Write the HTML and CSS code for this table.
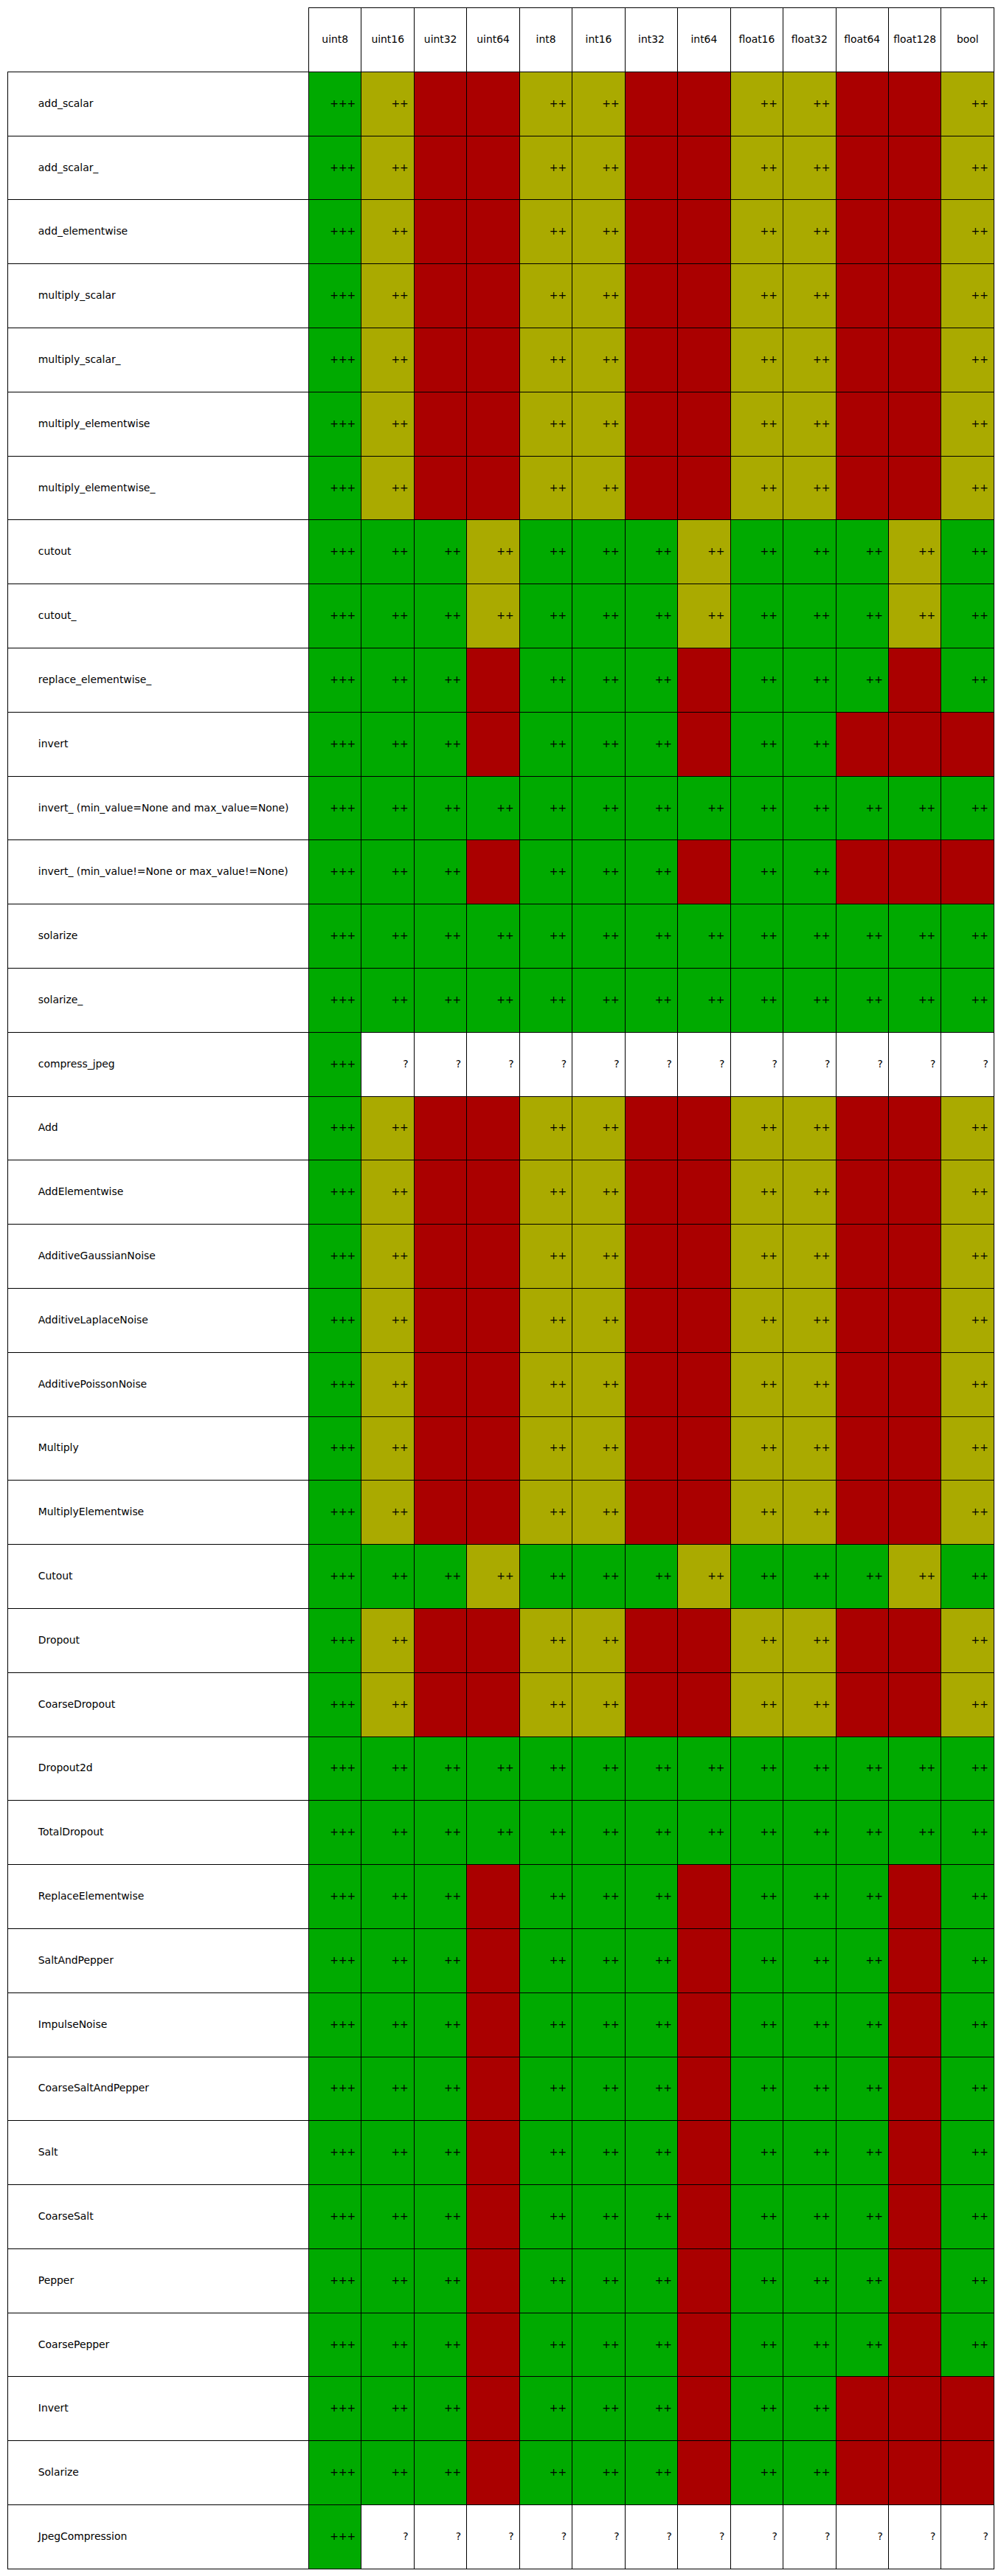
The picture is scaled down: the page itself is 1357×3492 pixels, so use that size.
FILE: index.html
```html
<!DOCTYPE html>
<html lang="en">
<head>
<meta charset="utf-8">
<title>Augmenter dtype support</title>
<link rel="stylesheet" href="styles.css">
</head>
<body>
<table class="grid">
<colgroup><col class="c-lbl"><col class="c-d"><col class="c-d"><col class="c-d"><col class="c-d"><col class="c-d"><col class="c-d"><col class="c-d"><col class="c-d"><col class="c-d"><col class="c-d"><col class="c-d"><col class="c-d"><col class="c-d"></colgroup>
<thead>
<tr><th class="corner"></th><th>uint8</th><th>uint16</th><th>uint32</th><th>uint64</th><th>int8</th><th>int16</th><th>int32</th><th>int64</th><th>float16</th><th>float32</th><th>float64</th><th>float128</th><th>bool</th></tr>
</thead>
<tbody>
<tr><th class="lbl">add_scalar</th><td class="g">+++</td><td class="y">++</td><td class="r"></td><td class="r"></td><td class="y">++</td><td class="y">++</td><td class="r"></td><td class="r"></td><td class="y">++</td><td class="y">++</td><td class="r"></td><td class="r"></td><td class="y">++</td></tr>
<tr><th class="lbl">add_scalar_</th><td class="g">+++</td><td class="y">++</td><td class="r"></td><td class="r"></td><td class="y">++</td><td class="y">++</td><td class="r"></td><td class="r"></td><td class="y">++</td><td class="y">++</td><td class="r"></td><td class="r"></td><td class="y">++</td></tr>
<tr><th class="lbl">add_elementwise</th><td class="g">+++</td><td class="y">++</td><td class="r"></td><td class="r"></td><td class="y">++</td><td class="y">++</td><td class="r"></td><td class="r"></td><td class="y">++</td><td class="y">++</td><td class="r"></td><td class="r"></td><td class="y">++</td></tr>
<tr><th class="lbl">multiply_scalar</th><td class="g">+++</td><td class="y">++</td><td class="r"></td><td class="r"></td><td class="y">++</td><td class="y">++</td><td class="r"></td><td class="r"></td><td class="y">++</td><td class="y">++</td><td class="r"></td><td class="r"></td><td class="y">++</td></tr>
<tr><th class="lbl">multiply_scalar_</th><td class="g">+++</td><td class="y">++</td><td class="r"></td><td class="r"></td><td class="y">++</td><td class="y">++</td><td class="r"></td><td class="r"></td><td class="y">++</td><td class="y">++</td><td class="r"></td><td class="r"></td><td class="y">++</td></tr>
<tr><th class="lbl">multiply_elementwise</th><td class="g">+++</td><td class="y">++</td><td class="r"></td><td class="r"></td><td class="y">++</td><td class="y">++</td><td class="r"></td><td class="r"></td><td class="y">++</td><td class="y">++</td><td class="r"></td><td class="r"></td><td class="y">++</td></tr>
<tr><th class="lbl">multiply_elementwise_</th><td class="g">+++</td><td class="y">++</td><td class="r"></td><td class="r"></td><td class="y">++</td><td class="y">++</td><td class="r"></td><td class="r"></td><td class="y">++</td><td class="y">++</td><td class="r"></td><td class="r"></td><td class="y">++</td></tr>
<tr><th class="lbl">cutout</th><td class="g">+++</td><td class="g">++</td><td class="g">++</td><td class="y">++</td><td class="g">++</td><td class="g">++</td><td class="g">++</td><td class="y">++</td><td class="g">++</td><td class="g">++</td><td class="g">++</td><td class="y">++</td><td class="g">++</td></tr>
<tr><th class="lbl">cutout_</th><td class="g">+++</td><td class="g">++</td><td class="g">++</td><td class="y">++</td><td class="g">++</td><td class="g">++</td><td class="g">++</td><td class="y">++</td><td class="g">++</td><td class="g">++</td><td class="g">++</td><td class="y">++</td><td class="g">++</td></tr>
<tr><th class="lbl">replace_elementwise_</th><td class="g">+++</td><td class="g">++</td><td class="g">++</td><td class="r"></td><td class="g">++</td><td class="g">++</td><td class="g">++</td><td class="r"></td><td class="g">++</td><td class="g">++</td><td class="g">++</td><td class="r"></td><td class="g">++</td></tr>
<tr><th class="lbl">invert</th><td class="g">+++</td><td class="g">++</td><td class="g">++</td><td class="r"></td><td class="g">++</td><td class="g">++</td><td class="g">++</td><td class="r"></td><td class="g">++</td><td class="g">++</td><td class="r"></td><td class="r"></td><td class="r"></td></tr>
<tr><th class="lbl">invert_ (min_value=None and max_value=None)</th><td class="g">+++</td><td class="g">++</td><td class="g">++</td><td class="g">++</td><td class="g">++</td><td class="g">++</td><td class="g">++</td><td class="g">++</td><td class="g">++</td><td class="g">++</td><td class="g">++</td><td class="g">++</td><td class="g">++</td></tr>
<tr><th class="lbl">invert_ (min_value!=None or max_value!=None)</th><td class="g">+++</td><td class="g">++</td><td class="g">++</td><td class="r"></td><td class="g">++</td><td class="g">++</td><td class="g">++</td><td class="r"></td><td class="g">++</td><td class="g">++</td><td class="r"></td><td class="r"></td><td class="r"></td></tr>
<tr><th class="lbl">solarize</th><td class="g">+++</td><td class="g">++</td><td class="g">++</td><td class="g">++</td><td class="g">++</td><td class="g">++</td><td class="g">++</td><td class="g">++</td><td class="g">++</td><td class="g">++</td><td class="g">++</td><td class="g">++</td><td class="g">++</td></tr>
<tr><th class="lbl">solarize_</th><td class="g">+++</td><td class="g">++</td><td class="g">++</td><td class="g">++</td><td class="g">++</td><td class="g">++</td><td class="g">++</td><td class="g">++</td><td class="g">++</td><td class="g">++</td><td class="g">++</td><td class="g">++</td><td class="g">++</td></tr>
<tr><th class="lbl">compress_jpeg</th><td class="g">+++</td><td class="w">?</td><td class="w">?</td><td class="w">?</td><td class="w">?</td><td class="w">?</td><td class="w">?</td><td class="w">?</td><td class="w">?</td><td class="w">?</td><td class="w">?</td><td class="w">?</td><td class="w">?</td></tr>
<tr><th class="lbl">Add</th><td class="g">+++</td><td class="y">++</td><td class="r"></td><td class="r"></td><td class="y">++</td><td class="y">++</td><td class="r"></td><td class="r"></td><td class="y">++</td><td class="y">++</td><td class="r"></td><td class="r"></td><td class="y">++</td></tr>
<tr><th class="lbl">AddElementwise</th><td class="g">+++</td><td class="y">++</td><td class="r"></td><td class="r"></td><td class="y">++</td><td class="y">++</td><td class="r"></td><td class="r"></td><td class="y">++</td><td class="y">++</td><td class="r"></td><td class="r"></td><td class="y">++</td></tr>
<tr><th class="lbl">AdditiveGaussianNoise</th><td class="g">+++</td><td class="y">++</td><td class="r"></td><td class="r"></td><td class="y">++</td><td class="y">++</td><td class="r"></td><td class="r"></td><td class="y">++</td><td class="y">++</td><td class="r"></td><td class="r"></td><td class="y">++</td></tr>
<tr><th class="lbl">AdditiveLaplaceNoise</th><td class="g">+++</td><td class="y">++</td><td class="r"></td><td class="r"></td><td class="y">++</td><td class="y">++</td><td class="r"></td><td class="r"></td><td class="y">++</td><td class="y">++</td><td class="r"></td><td class="r"></td><td class="y">++</td></tr>
<tr><th class="lbl">AdditivePoissonNoise</th><td class="g">+++</td><td class="y">++</td><td class="r"></td><td class="r"></td><td class="y">++</td><td class="y">++</td><td class="r"></td><td class="r"></td><td class="y">++</td><td class="y">++</td><td class="r"></td><td class="r"></td><td class="y">++</td></tr>
<tr><th class="lbl">Multiply</th><td class="g">+++</td><td class="y">++</td><td class="r"></td><td class="r"></td><td class="y">++</td><td class="y">++</td><td class="r"></td><td class="r"></td><td class="y">++</td><td class="y">++</td><td class="r"></td><td class="r"></td><td class="y">++</td></tr>
<tr><th class="lbl">MultiplyElementwise</th><td class="g">+++</td><td class="y">++</td><td class="r"></td><td class="r"></td><td class="y">++</td><td class="y">++</td><td class="r"></td><td class="r"></td><td class="y">++</td><td class="y">++</td><td class="r"></td><td class="r"></td><td class="y">++</td></tr>
<tr><th class="lbl">Cutout</th><td class="g">+++</td><td class="g">++</td><td class="g">++</td><td class="y">++</td><td class="g">++</td><td class="g">++</td><td class="g">++</td><td class="y">++</td><td class="g">++</td><td class="g">++</td><td class="g">++</td><td class="y">++</td><td class="g">++</td></tr>
<tr><th class="lbl">Dropout</th><td class="g">+++</td><td class="y">++</td><td class="r"></td><td class="r"></td><td class="y">++</td><td class="y">++</td><td class="r"></td><td class="r"></td><td class="y">++</td><td class="y">++</td><td class="r"></td><td class="r"></td><td class="y">++</td></tr>
<tr><th class="lbl">CoarseDropout</th><td class="g">+++</td><td class="y">++</td><td class="r"></td><td class="r"></td><td class="y">++</td><td class="y">++</td><td class="r"></td><td class="r"></td><td class="y">++</td><td class="y">++</td><td class="r"></td><td class="r"></td><td class="y">++</td></tr>
<tr><th class="lbl">Dropout2d</th><td class="g">+++</td><td class="g">++</td><td class="g">++</td><td class="g">++</td><td class="g">++</td><td class="g">++</td><td class="g">++</td><td class="g">++</td><td class="g">++</td><td class="g">++</td><td class="g">++</td><td class="g">++</td><td class="g">++</td></tr>
<tr><th class="lbl">TotalDropout</th><td class="g">+++</td><td class="g">++</td><td class="g">++</td><td class="g">++</td><td class="g">++</td><td class="g">++</td><td class="g">++</td><td class="g">++</td><td class="g">++</td><td class="g">++</td><td class="g">++</td><td class="g">++</td><td class="g">++</td></tr>
<tr><th class="lbl">ReplaceElementwise</th><td class="g">+++</td><td class="g">++</td><td class="g">++</td><td class="r"></td><td class="g">++</td><td class="g">++</td><td class="g">++</td><td class="r"></td><td class="g">++</td><td class="g">++</td><td class="g">++</td><td class="r"></td><td class="g">++</td></tr>
<tr><th class="lbl">SaltAndPepper</th><td class="g">+++</td><td class="g">++</td><td class="g">++</td><td class="r"></td><td class="g">++</td><td class="g">++</td><td class="g">++</td><td class="r"></td><td class="g">++</td><td class="g">++</td><td class="g">++</td><td class="r"></td><td class="g">++</td></tr>
<tr><th class="lbl">ImpulseNoise</th><td class="g">+++</td><td class="g">++</td><td class="g">++</td><td class="r"></td><td class="g">++</td><td class="g">++</td><td class="g">++</td><td class="r"></td><td class="g">++</td><td class="g">++</td><td class="g">++</td><td class="r"></td><td class="g">++</td></tr>
<tr><th class="lbl">CoarseSaltAndPepper</th><td class="g">+++</td><td class="g">++</td><td class="g">++</td><td class="r"></td><td class="g">++</td><td class="g">++</td><td class="g">++</td><td class="r"></td><td class="g">++</td><td class="g">++</td><td class="g">++</td><td class="r"></td><td class="g">++</td></tr>
<tr><th class="lbl">Salt</th><td class="g">+++</td><td class="g">++</td><td class="g">++</td><td class="r"></td><td class="g">++</td><td class="g">++</td><td class="g">++</td><td class="r"></td><td class="g">++</td><td class="g">++</td><td class="g">++</td><td class="r"></td><td class="g">++</td></tr>
<tr><th class="lbl">CoarseSalt</th><td class="g">+++</td><td class="g">++</td><td class="g">++</td><td class="r"></td><td class="g">++</td><td class="g">++</td><td class="g">++</td><td class="r"></td><td class="g">++</td><td class="g">++</td><td class="g">++</td><td class="r"></td><td class="g">++</td></tr>
<tr><th class="lbl">Pepper</th><td class="g">+++</td><td class="g">++</td><td class="g">++</td><td class="r"></td><td class="g">++</td><td class="g">++</td><td class="g">++</td><td class="r"></td><td class="g">++</td><td class="g">++</td><td class="g">++</td><td class="r"></td><td class="g">++</td></tr>
<tr><th class="lbl">CoarsePepper</th><td class="g">+++</td><td class="g">++</td><td class="g">++</td><td class="r"></td><td class="g">++</td><td class="g">++</td><td class="g">++</td><td class="r"></td><td class="g">++</td><td class="g">++</td><td class="g">++</td><td class="r"></td><td class="g">++</td></tr>
<tr><th class="lbl">Invert</th><td class="g">+++</td><td class="g">++</td><td class="g">++</td><td class="r"></td><td class="g">++</td><td class="g">++</td><td class="g">++</td><td class="r"></td><td class="g">++</td><td class="g">++</td><td class="r"></td><td class="r"></td><td class="r"></td></tr>
<tr><th class="lbl">Solarize</th><td class="g">+++</td><td class="g">++</td><td class="g">++</td><td class="r"></td><td class="g">++</td><td class="g">++</td><td class="g">++</td><td class="r"></td><td class="g">++</td><td class="g">++</td><td class="r"></td><td class="r"></td><td class="r"></td></tr>
<tr><th class="lbl">JpegCompression</th><td class="g">+++</td><td class="w">?</td><td class="w">?</td><td class="w">?</td><td class="w">?</td><td class="w">?</td><td class="w">?</td><td class="w">?</td><td class="w">?</td><td class="w">?</td><td class="w">?</td><td class="w">?</td><td class="w">?</td></tr>
</tbody>
</table>
</body>
</html>
```
FILE: styles.css
```css
html, body {
  margin: 0;
  padding: 0;
  background: #ffffff;
}

body {
  font-family: "DejaVu Sans", "Liberation Sans", sans-serif;
  color: #000000;
}

.grid {
  margin: 10px 0 0 10px;
  border-collapse: collapse;
  table-layout: fixed;
  width: 1338px;
}

.c-lbl {
  width: 408px;
}

.grid th,
.grid td {
  border: 1px solid #000000;
  height: 85.8px;
  padding: 0;
  font-size: 13.9px;
  font-weight: normal;
  line-height: 1;
  vertical-align: middle;
  white-space: nowrap;
  overflow: hidden;
}

.grid thead th {
  text-align: center;
  background: #ffffff;
}

.grid thead th.corner {
  border: none;
}

.grid th.lbl {
  text-align: left;
  padding-left: 40.8px;
  background: #ffffff;
}

.grid td {
  text-align: right;
  padding-right: 7.2px;
}

.g { background: #00aa00; }
.y { background: #aaaa00; }
.r { background: #aa0000; }
.w { background: #ffffff; }
```
